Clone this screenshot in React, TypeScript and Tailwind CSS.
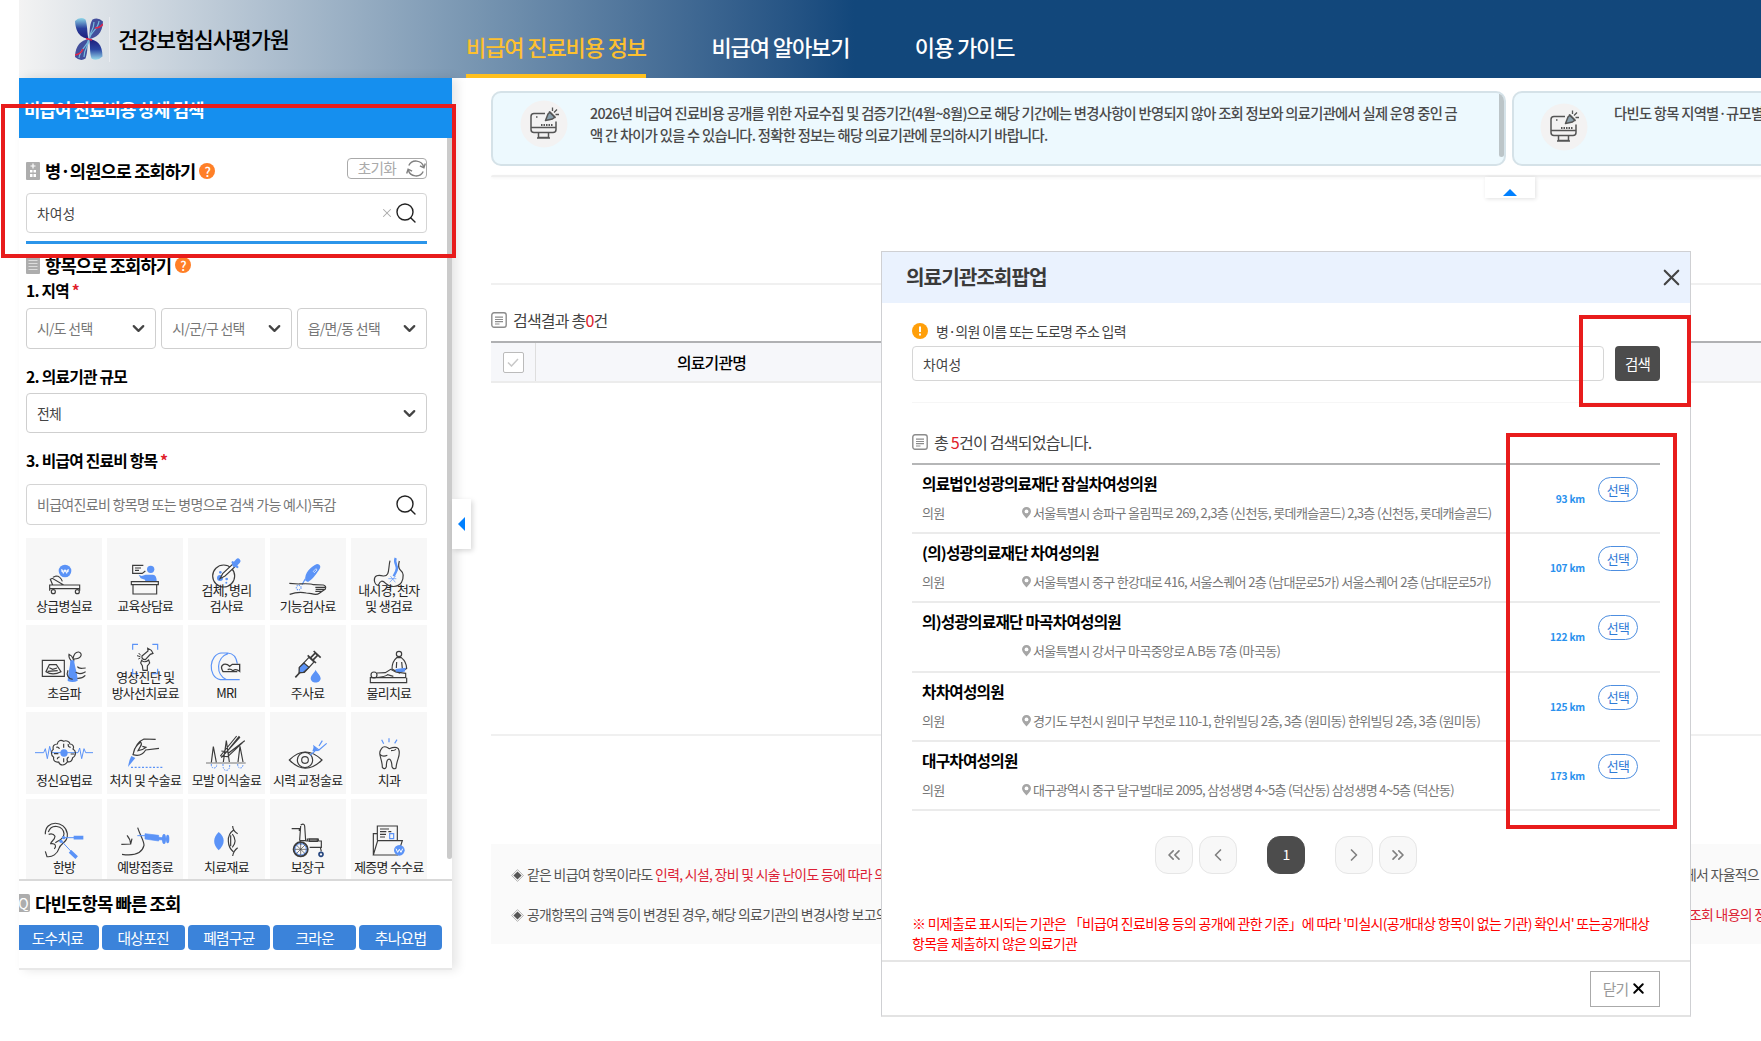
import { useState } from 'react'
import type { ReactNode } from 'react'
import clsx from 'clsx'
import { ChevronDown, ChevronLeft, ChevronRight, ChevronsLeft, ChevronsRight, Search, X } from 'lucide-react'

const BLUE = '#5b93f7'

interface Item {
  label: string[]
  icon: ReactNode
}

interface Hospital {
  name: string
  kind: string
  address: string
  distance: string
}

const hospitals: Hospital[] = [
  {
    name: '의료법인성광의료재단 잠실차여성의원',
    kind: '의원',
    address: '서울특별시 송파구 올림픽로 269, 2,3층 (신천동, 롯데캐슬골드) 2,3층 (신천동, 롯데캐슬골드)',
    distance: '93 km',
  },
  {
    name: '(의)성광의료재단 차여성의원',
    kind: '의원',
    address: '서울특별시 중구 한강대로 416, 서울스퀘어 2층 (남대문로5가) 서울스퀘어 2층 (남대문로5가)',
    distance: '107 km',
  },
  {
    name: '의)성광의료재단 마곡차여성의원',
    kind: '',
    address: '서울특별시 강서구 마곡중앙로 A.B동 7층 (마곡동)',
    distance: '122 km',
  },
  {
    name: '차차여성의원',
    kind: '의원',
    address: '경기도 부천시 원미구 부천로 110-1, 한위빌딩 2층, 3층 (원미동) 한위빌딩 2층, 3층 (원미동)',
    distance: '125 km',
  },
  {
    name: '대구차여성의원',
    kind: '의원',
    address: '대구광역시 중구 달구벌대로 2095, 삼성생명 4~5층 (덕산동) 삼성생명 4~5층 (덕산동)',
    distance: '173 km',
  },
]

// Each tile drawing uses a 228x246 canvas, three units per pixel
const items: Item[] = [
  {
    label: ['상급병실료'],
    icon: (
      <>
        <circle cx="117" cy="99" r="19" fill={BLUE} stroke="none" />
        <path d="M107 93l5 13 5-11 5 11 5-13M105 99h24" stroke="#fff" strokeWidth="3" />
        <path d="M71 141h90v11H71zM71 152v6M161 152v6M80 141l-7-17 6-3 34 20M81 118l9-4c10 0 16 8 19 16" />
        <circle cx="82" cy="161" r="6" />
        <circle cx="154" cy="161" r="6" />
      </>
    ),
  },
  {
    label: ['교육상담료'],
    icon: (
      <>
        <path d="M109 82H77v24h30M84 90h18M84 97h12M105 107l10-8" />
        <path d="M95 110l9 4 12-4h22q11 1 11 20h-34l-1-5-13-4z" fill={BLUE} stroke="none" />
        <circle cx="131" cy="94" r="11" fill={BLUE} stroke="none" />
        <path d="M73 131h81v9H73zM78 140v28h71v-28" />
      </>
    ),
  },
  {
    label: ['검체, 병리', '검사료'],
    icon: (
      <>
        <circle cx="107" cy="114" r="33" />
        <circle cx="96" cy="120" r="9" fill={BLUE} stroke="none" />
        <circle cx="97" cy="103" r="4" fill={BLUE} stroke="none" />
        <circle cx="116" cy="123" r="4" fill={BLUE} stroke="none" />
        <circle cx="115" cy="134" r="3" fill={BLUE} stroke="none" />
        <path d="M96 122l8-15 33-31 7 7-33 31z" fill="#fff" />
        <path d="M134 73l14 14" stroke={BLUE} strokeWidth="7" strokeLinecap="round" />
        <path d="M140 80l10-11" stroke={BLUE} strokeWidth="15" strokeLinecap="round" />
      </>
    ),
  },
  {
    label: ['기능검사료'],
    icon: (
      <>
        <path d="M106 128c-4-24 18-43 35-50 12 2 12 10 6 18-10 15-22 30-33 36z" fill={BLUE} stroke="none" />
        <path d="M130 100l8-8 3 4-8 8z" stroke="#fff" strokeWidth="2" />
        <path d="M96 140l10-18" stroke={BLUE} />
        <path d="M58 136l28 2c20-1 34-2 44 2l30 1q10 3 6 12l-18 13q-8 6-24 1l-15-2c-20-4-33-2-50 4M136 148h29M137 154h28M136 160h20" />
        <circle cx="86" cy="149" r="7" stroke={BLUE} strokeDasharray="3 3" />
      </>
    ),
  },
  {
    label: ['내시경, 천자', '및 생검료'],
    icon: (
      <>
        <path d="M117 68c-6 24 0 47-20 46-16-4-28-2-27 14 1 7 6 14 12 14 6-15 12-16 22-6 14 14 36 12 47-2 8-16 7-30-3-38-7-6-6-16-3-27" />
        <path d="M134 60c-8 20 12 24 1 41l-7 14" stroke={BLUE} strokeWidth="7" />
        <path d="M112 122h24M118 114l15 19M134 114l-18 19" stroke={BLUE} strokeWidth="2" />
      </>
    ),
  },
  {
    label: ['초음파'],
    icon: (
      <>
        <path d="M49 106h66v48H49zM70 119h21l14 21c-15 8-33 8-45 0zM70 128l10 5 13-4M65 139l30-2" />
        <path d="M137 109q-10-11-8-21 9 4 12 13 4-21 17-20c14 4 8 21-14 21l-2 12" />
        <path d="M133 106h11c2 18 11 42 11 61q-14 8-30 1c0-19 8-43 8-62z" fill={BLUE} stroke="none" />
        <path d="M126 136c-6 14 1 26 14 27M154 125c6 9 14 4 25 4M149 142c14 9 21 2 30-2M154 160q14 1 24-9" />
      </>
    ),
  },
  {
    label: ['영상진단 및', '방사선치료료'],
    icon: (
      <>
        <path d="M77 74V58h16M136 58h16v16M77 131v15h16M136 146h16v-15" stroke={BLUE} />
        <path d="M105 93l18-15-1-8 11 6 5 9-8 3-15 16q-12 0-10-11zM104 106q9 9 21-1l3 9-7 9v13h-13l-2-14-5-8z" />
        <path d="M90 92l10 3M94 102l6-3M95 84l6 7" strokeWidth="3" />
      </>
    ),
  },
  {
    label: ['MRI'],
    icon: (
      <>
        <path d="M101 84c-38 2-44 72-4 80h58M97 84h22q25 2 29 32M120 86c-36 10-38 64-4 78" stroke={BLUE} />
        <path d="M148 140h-43q-10-16 2-22 11-2 18 6l8-6h22v21q-11-9-20-2-9-7-16-3" strokeWidth="4" />
      </>
    ),
  },
  {
    label: ['주사료'],
    icon: (
      <>
        <path d="M88 128l29-31 15 14-29 31-14 1z" fill="#fff" />
        <path d="M88 127l14-13 15 13-17 15-13 1z" fill={BLUE} />
        <path d="M76 157l15-16M113 91l25 23M123 97l13-13 7 7-13 13M131 78l21 20" strokeWidth="5" />
        <path d="M137 134c4 10 14 15 15 26 0 17-30 17-30 0 1-11 11-16 15-26z" fill={BLUE} stroke="none" />
      </>
    ),
  },
  {
    label: ['물리치료'],
    icon: (
      <>
        <circle cx="144" cy="87" r="8" />
        <path d="M137 98h14q15 12 16 32l-22 14-22-12q0-23 14-34zM137 111l-1 18M152 111l2 20" />
        <path d="M133 132l32-4-4 12-26 2z" fill={BLUE} stroke="none" />
        <circle cx="69" cy="150" r="9" />
        <path d="M78 144l25-1 16-10 15 8 30 4v13H58v15h109v-15M79 158q24-3 31-9l17 5" />
      </>
    ),
  },
  {
    label: ['정신요법료'],
    icon: (
      <>
        <path d="M27 122h26l5-12 6 30 7-37 5 19h29M122 122h34l5-14 6 32 7-30 5 12h22" stroke={BLUE} strokeWidth="3" />
        <path d="M113 88c8-4 18 0 19 8 9 0 13 9 9 15 11 6 9 22-1 26-1 10-8 14-16 12-7 13-22 13-26 1-10 2-17-4-15-14-9-5-8-20-1-24-3-10 3-16 12-16 1-10 10-14 19-8zM91 106q8-2 9 5M127 96q-2 9 7 10M94 142q0-7 7-7M125 148q-5-8 3-13M84 125h13M134 126h11M113 95v12M113 139v12" />
        <circle cx="114" cy="123" r="11" fill={BLUE} stroke="none" />
      </>
    ),
  },
  {
    label: ['처치 및 수술료'],
    icon: (
      <>
        <path d="M146 82l-35-1c-18 7-29 29-33 47 18 6 30-1 38-14l40-5M80 120q3-16 21-30 5 6-1 14l-7 12q15-2 24-10l-11-3" />
        <path d="M73 132l12 6-22 27q3-20 10-33z" fill={BLUE} stroke="none" />
        <path d="M72 166h96" stroke={BLUE} strokeDasharray="6 5" />
      </>
    ),
  },
  {
    label: ['모발 이식술료'],
    icon: (
      <>
        <path d="M54 153h119" stroke="#777" />
        <path d="M70 151l6-47 9 47M106 150l9-64 9 64M150 150l6-47 9 47M97 132l49-60M100 137l56-62M97 132l22 2 51-48M100 117l20 3M154 72l-30 38M170 86l-49 38" />
        <path d="M70 156q-1 12 8 12t8-12M105 156q-1 19 10 19t10-19M149 156q0 12 8 12t8-12" stroke={BLUE} strokeWidth="3" strokeDasharray="5 3" />
      </>
    ),
  },
  {
    label: ['시력 교정술료'],
    icon: (
      <>
        <path d="M58 144q48-48 98 0-50 49-98 0z" />
        <circle cx="105" cy="144" r="23" />
        <circle cx="105" cy="144" r="10" />
        <path d="M120 130l15-13M136 117l-4-14 15 11 23-20M147 102l10-16" stroke={BLUE} />
        <path d="M132 103l16 14-21 1z" fill={BLUE} stroke="none" />
      </>
    ),
  },
  {
    label: ['치과'],
    icon: (
      <>
        <path d="M92 109c8-11 17-2 23 1 10-4 19-7 27 0 10 19-5 29-7 58q-8 6-12-4c-1-31-17-29-17 0q-5 11-12 2c0-28-16-39-2-57zM87 127q8 9 22 3M120 116q10 0 15-4" />
        <path d="M92 83l6 12M114 79v12M138 83l-7 11" stroke={BLUE} />
      </>
    ),
  },
  {
    label: ['한방'],
    icon: (
      <>
        <path d="M58 106c-2-45 60-43 66-2 3 26-20 27-25 44-5 17-20 27-36 25l-5-16M67 99c9-26 44-20 47 5-1 18-17 20-26 27M68 106q14-4 19 6c0 11-12 14-13 22 15-2 18 7 11 16" />
        <path d="M108 116h40M105 125l35 37" stroke={BLUE} strokeWidth="3" />
        <path d="M143 116h29M132 157l20 19" stroke={BLUE} strokeWidth="11" />
        <circle cx="113" cy="116" r="5" fill={BLUE} stroke="none" />
        <circle cx="105" cy="127" r="5" fill={BLUE} stroke="none" />
      </>
    ),
  },
  {
    label: ['예방접종료'],
    icon: (
      <>
        <path d="M92 86c9 27 19 39 19 53-6 25-31 32-66 27M43 136l28-1q-1-15-11-26M71 135l4-16" />
        <path d="M91 110h25" stroke={BLUE} strokeWidth="3" />
        <path d="M114 104l41 5v17l-41-6zM155 115l14 1v7l-14-1z" fill={BLUE} stroke={BLUE} strokeWidth="2" />
        <ellipse cx="171" cy="120" rx="6" ry="15" fill={BLUE} stroke="none" />
        <ellipse cx="182" cy="120" rx="5" ry="13" fill={BLUE} stroke="none" />
      </>
    ),
  },
  {
    label: ['치료재료'],
    icon: (
      <>
        <path d="M92 99c20 16 20 36 0 55-18-18-18-38 0-55z" fill={BLUE} stroke="none" />
        <path d="M134 81q0 14 15 23M134 171q2-15 15-25M136 94c-22 15-18 50 0 64M133 105c11 14 11 27 0 40M128 109v33" />
      </>
    ),
  },
  {
    label: ['보장구'],
    icon: (
      <>
        <path d="M65 89h23v7M92 81l-3 41 4 15M92 78q11-6 12 3l3 44h-17M107 126h47v19h-35M112 120h33v6h-33zM151 145l3 12" />
        <path d="M118 120h24v7h-24z" fill="#888" />
        <circle cx="92" cy="151" r="21" strokeWidth="6" />
        <circle cx="92" cy="151" r="17" stroke={BLUE} strokeWidth="3" />
        <path d="M92 133v36M74 151h36M79 138l26 26M105 138l-26 26" strokeWidth="2" />
        <circle cx="153" cy="166" r="6" stroke="#27477f" strokeWidth="5" />
      </>
    ),
  },
  {
    label: ['제증명 수수료'],
    icon: (
      <>
        <path d="M79 124V81h60v43M67 168v-64h12M67 168l13-43h74l-14 43zM87 90h27M87 98h19M87 106h18M87 114h15M112 98h9" />
        <path d="M116 104h12v15h-12z" stroke={BLUE} />
        <circle cx="145" cy="154" r="16" fill={BLUE} stroke="none" />
        <path d="M135 149l5 11 5-9 5 9 5-11" stroke="#fff" strokeWidth="3" />
      </>
    ),
  },
]

const regions = ['시/도 선택', '시/군/구 선택', '읍/면/동 선택']
const quickItems = ['도수치료', '대상포진', '폐렴구균', '크라운', '추나요법']

function SelectBox({ text, muted }: { text: string; muted?: boolean }) {
  return (
    <button
      className={clsx(
        'flex h-full min-w-0 flex-1 items-center justify-between rounded-[4px] border border-[#cfcfcf] bg-white pr-[7px] pl-[10px] text-[13.9px]',
        muted ? 'text-[#777]' : 'text-[#444]'
      )}
    >
      <span>{text}</span>
      <ChevronDown size={19} strokeWidth={2.8} className="text-[#444]" />
    </button>
  )
}

function Help() {
  return (
    <span className="ml-[4px] flex size-4 items-center justify-center rounded-full bg-[#ff7f27] text-[13px] leading-none font-medium text-white">?</span>
  )
}

function Required() {
  return <span className="text-[#e0202a]">*</span>
}

function ListIcon() {
  return (
    <svg width="16" height="16" viewBox="0 0 16 16" fill="none" stroke="#8c8c8c" strokeWidth="1.4">
      <rect x="0.8" y="0.8" width="14.4" height="14.4" rx="2.2" />
      <path d="M4 5.2h8M4 7.5h8M4 9.7h8M4 12h4.5" strokeWidth="1.2" />
    </svg>
  )
}

function ResetIcon() {
  return (
    <svg width="20" height="19" viewBox="0 0 20 19" fill="none" stroke="#808080" strokeWidth="1.4">
      <path d="M2.800 6.500a8 8 0 0 1 14.900 1.500M17.200 12.500a8 8 0 0 1-14.900-1.500" />
      <path d="M19.300 4.500l-1.400 4.200-4-1.800M.7 14.500l1.400-4.200 4 1.800" />
    </svg>
  )
}

function Pin() {
  return (
    <svg width="9" height="12" viewBox="0 0 9 12" className="mr-[2px] shrink-0">
      <path d="M4.500 0a4.400 4.400 0 0 1 4.500 4.400C9 7 6.500 9 4.500 11.500 2.500 9 0 7 0 4.400A4.400 4.400 0 0 1 4.500 0z" fill="#a6a6a6" />
      <circle cx="4.500" cy="4.400" r="1.900" fill="#fff" />
    </svg>
  )
}

function Diamond() {
  return (
    <svg width="13" height="13" viewBox="0 0 13 13" className="mr-[3px] inline-block align-[-2px]">
      <path d="M6.500 .6l5.900 5.900-5.900 5.900L.6 6.500z" fill="none" stroke="#aaa" strokeWidth="0.900" />
      <path d="M6.500 2.400l4.100 4.100-4.100 4.100-4.100-4.100z" fill="#555" />
    </svg>
  )
}

function NoticeIcon() {
  return (
    <svg width="48" height="48" viewBox="0 0 48 48" fill="none" className="shrink-0">
      <circle cx="24" cy="24" r="23.5" fill="#f3f2f2" />
      <g stroke="#555" strokeWidth="1.5" strokeLinejoin="round">
        <path d="M25 13.500H14q-3 0-3 3v13q0 3 3 3h19q3 0 3-3v-8M11 27.500h25M18.500 33v4.500h10V33M17 38h13M16 17h1.500" />
        <path d="M21 25h12" strokeDasharray="1.500 1" strokeWidth="1.800" />
        <path d="M25.500 20.500l2.500-6.500 2-2 5 5-2.500 2zM29 11.500l6.500 6.500" fill="#8aa0ad" />
        <path d="M32.500 11V7.500M34 12.500l3-3M35.500 14.500H39" strokeWidth="1.300" />
      </g>
    </svg>
  )
}

function Logo() {
  return (
    <svg width="28" height="42" viewBox="0 0 28 42">
      <defs>
        <linearGradient id="armTop" x1="0" y1="0" x2="0" y2="1">
          <stop offset="0" stopColor="#8fd6e8" />
          <stop offset="0.5" stopColor="#2a3f9c" />
          <stop offset="1" stopColor="#1d1c7a" />
        </linearGradient>
        <linearGradient id="armBottom" x1="0" y1="1" x2="0" y2="0">
          <stop offset="0" stopColor="#9adcec" />
          <stop offset="0.5" stopColor="#2b46a2" />
          <stop offset="1" stopColor="#1d1c7a" />
        </linearGradient>
      </defs>
      <path d="M0 3Q5-2 10.500 1.500C12.500 7 12 15 13.500 21 8 19.500 1 18 0 3z" fill="url(#armTop)" />
      <path d="M17.500 1.500Q23-1.500 28 3.500C27.500 16 21 20 14 21c1-6 0-14 3.500-19.500z" fill="#434f9c" />
      <path d="M14 21c8 1 13.500 5 13.500 17.500Q22 44 16.500 40.500C14.500 35 15.500 27 14 21z" fill="url(#armBottom)" />
      <path d="M13.500 21C6 22.500.5 27 0 39q5.500 5 10.500 1.500C13 34 12 27 13.500 21z" fill="#434f9c" />
      <path d="M24 3c-1 9-8 10-10 18S5 31 4 40M19 4c0 9-5 10-5 17s-5 9-5 18" stroke="#79b9dc" strokeWidth="1.200" fill="none" />
      <path d="M28 6q-3 4-8 4M0 37q6-1 8-6M11 20.500l6 1.500" stroke="#e0264a" strokeWidth="1.500" fill="none" />
    </svg>
  )
}

function Header() {
  return (
    <header className="flex h-[78px] shrink-0 bg-linear-to-r from-[#f3f3f3] via-[#7795b1] via-[459px] to-[#12477b] to-[835px] pl-14">
      <div className="flex h-[78px] w-[391px] items-center">
        <Logo />
        <span className="ml-[6px] h-[45px] w-px bg-white/40" />
        <h1 className="ml-[8px] text-[21.8px] leading-8 font-medium text-black">건강보험심사평가원</h1>
      </div>
      <nav className="flex gap-[65.5px] text-[22px] font-medium text-white">
        <a className="h-[78px] border-b-4 border-[#ffc01e] pt-[29px] leading-[34px] text-[#fdc02f]">비급여 진료비용 정보</a>
        <a className="pt-[29px] leading-[34px]">비급여 알아보기</a>
        <a className="pt-[29px] leading-[34px]">이용 가이드</a>
      </nav>
    </header>
  )
}

function Sidebar() {
  const [keyword, setKeyword] = useState('차여성')

  return (
    <aside className="relative z-10 h-[892px] w-[433px] shrink-0 bg-white shadow-[5px_0_10px_rgba(0,0,0,0.1)]">
      <h2 className="h-[60px] bg-[#158fef] pt-[17px] pl-[5px] text-[17.8px] leading-7 font-bold text-white">비급여 진료비용 상세 검색</h2>

      <div className="flex h-[741px] justify-between overflow-hidden">
        <div className="w-[408px] pt-[22px] pl-[7px]">
          <div className="flex h-[22px] items-center">
            <svg width="14" height="18" viewBox="0 0 14 18">
              <rect width="14" height="18" rx="1" fill="#adadad" />
              <path d="M7 1.500v5M4.500 4h5" stroke="#fff" strokeWidth="1.200" />
              <path d="M4 8h2.500v2.500H4zM7.500 8H10v2.500H7.500zM4 12h2.500v3H4zM7.500 12H10v3H7.500z" fill="#fff" />
            </svg>
            <h3 className="ml-[5px] text-[17.6px] font-bold whitespace-nowrap text-black">병·의원으로 조회하기</h3>
            <Help />
            <button className="-mt-[5px] ml-auto flex h-[21px] w-20 items-center justify-end gap-[10px] rounded-[4px] border border-[#aaa] text-[14.7px] leading-none text-[#aaa]">
              초기화
              <ResetIcon />
            </button>
          </div>

          <div className="mt-[11px] flex h-10 items-center rounded-[4px] border border-[#d4d4d4] pr-[8px] pl-[10px]">
            <input
              value={keyword}
              onChange={e => setKeyword(e.target.value)}
              className="min-w-0 flex-1 text-[13.8px] tracking-normal! text-[#444] outline-none"
            />
            <X size={14} strokeWidth={1.8} className="text-[#aaa]" onClick={() => setKeyword('')} />
            <Search size={24} strokeWidth={1.4} className="text-[#222]" />
          </div>
          <div className="mt-2 h-[3px] bg-[#2b95ea]" />

          <div className="mt-[10px] flex h-[22px] items-center">
            <svg width="14" height="18" viewBox="0 0 14 18">
              <rect width="14" height="18" rx="1" fill="#adadad" />
              <path d="M2.500 4.500h9M2.500 7.500h9M2.500 10.500h9M2.500 13.500h9" stroke="#ddd" strokeWidth="1" />
            </svg>
            <h3 className="ml-[5px] text-[17.7px] font-bold text-black">항목으로 조회하기</h3>
            <Help />
          </div>

          <h4 className="mt-[4px] h-[22px] text-[15.7px] leading-[22px] font-bold text-black">
            1. 지역 <Required />
          </h4>
          <div className="mt-[6px] flex h-[41px] gap-[5px]">
            {regions.map(r => <SelectBox key={r} text={r} muted />)}
          </div>

          <h4 className="mt-[17px] h-[22px] text-[15.8px] leading-[22px] font-bold text-black">2. 의료기관 규모</h4>
          <div className="mt-[5px] flex h-10">
            <SelectBox text="전체" />
          </div>

          <h4 className="mt-[17px] h-[22px] text-[15.8px] leading-[22px] font-bold text-black">
            3. 비급여 진료비 항목 <Required />
          </h4>
          <div className="mt-[12px] flex h-[41px] items-center rounded-[4px] border border-[#d4d4d4] pr-[8px] pl-[10px]">
            <input
              placeholder="비급여진료비 항목명 또는 병명으로 검색 가능 예시)독감"
              className="min-w-0 flex-1 text-[14px] outline-none placeholder:text-[#777]"
            />
            <Search size={24} strokeWidth={1.4} className="text-[#222]" />
          </div>

          <div className="mt-[13px] grid auto-rows-[82px] grid-cols-5 gap-[5px]">
            {items.map(item => (
              <button key={item.label[0]} className="grid bg-[#f7f7f7]">
                <svg
                  viewBox="0 0 228 246"
                  fill="none"
                  stroke="#3c3c3c"
                  strokeWidth="3.500"
                  className="[grid-area:1/1] h-[82px] w-[76px]"
                >
                  {item.icon}
                </svg>
                <span className="z-10 mb-[6px] self-end text-center text-[12.9px] leading-4 whitespace-nowrap text-[#222] [grid-area:1/1]">
                  {item.label.map(line => <span key={line} className="block">{line}</span>)}
                </span>
              </button>
            ))}
          </div>
        </div>
        <div className="h-[721px] w-[5px] rounded-b-[3px] bg-[#cbcbcb]" />
      </div>

      <div className="h-[91px] overflow-hidden border-y-2 border-t-[#d9d9d9] border-b-[#e8e8e8]">
        <div className="mt-[12px] -ml-[3px] flex h-5 items-center gap-[5px]">
          <span className="flex h-[18px] w-[14px] items-center justify-center rounded-[2px] bg-[#adadad] text-[14px] leading-none text-white">Q</span>
          <h3 className="text-[17.8px] leading-5 font-bold text-black">다빈도항목 빠른 조회</h3>
        </div>
        <div className="mt-3 -ml-[3px] flex w-[426px] gap-[3px]">
          {quickItems.map(q => (
            <button key={q} className="h-[25px] flex-1 rounded-[4px] bg-[#3b83da] text-[14.8px] leading-[23px] text-white">{q}</button>
          ))}
        </div>
      </div>

      {/* Collapse handle on the panel's edge */}
      <button className="absolute top-[421px] left-full flex h-[50px] w-[19px] items-center justify-center bg-white shadow-[2px_2px_5px_rgba(0,0,0,0.15)]">
        <svg width="7" height="14" viewBox="0 0 7 14"><path d="M7 0v14L0 7z" fill="#0080ff" /></svg>
      </button>
    </aside>
  )
}

function Main() {
  return (
    <main className="min-w-0 flex-1 overflow-hidden pt-[13px] pl-[39px]">
      <div className="flex h-[75px] gap-[6px] text-[14.3px] leading-[22px] font-medium text-[#4a4a4a]">
        <div className="flex w-[1015px] shrink-0 justify-between overflow-hidden rounded-[10px] border-2 border-[#d5e2e8] bg-[#edf9fe]">
          <div className="flex pt-[7px] pl-[27px]">
            <NoticeIcon />
            <p className="ml-[22px] pt-[2px] whitespace-nowrap">
              2026년 비급여 진료비용 공개를 위한 자료수집 및 검증기간(4월~8월)으로 해당 기간에는 변경사항이 반영되지 않아 조회 정보와 의료기관에서 실제 운영 중인 금<br />
              액 간 차이가 있을 수 있습니다. 정확한 정보는 해당 의료기관에 문의하시기 바랍니다.
            </p>
          </div>
          <div className="mt-px h-[63px] w-[5px] rounded-b-[3px] bg-[#bcc5c8]" />
        </div>
        <div className="flex w-[500px] shrink-0 rounded-[10px] border-2 border-[#d5e2e8] bg-[#edf9fe] pt-[10px] pl-[26px]">
          <NoticeIcon />
          <p className="-mt-px ml-[26px] whitespace-nowrap">다빈도 항목 지역별·규모별</p>
        </div>
      </div>

      <div className="mt-[9px] h-[2px] rounded-tl-full bg-[#efefef] shadow-[0_1px_3px_rgba(0,0,0,0.06)]" />
      <button className="ml-[994px] flex h-[21px] w-[50px] items-end justify-center bg-white pb-[2px] shadow-[1px_1px_4px_rgba(0,0,0,0.12)]">
        <svg width="14" height="7" viewBox="0 0 14 7"><path d="M0 7h14L7 0z" fill="#0080ff" /></svg>
      </button>

      <div className="mt-[85px] h-[2px] bg-[#f0f0f0]" />

      <div className="mt-[25px] flex h-5 items-center gap-[6px] text-[16px] leading-5 text-[#444]">
        <ListIcon />
        <p>검색결과 총<span className="text-[#e0202a]">0</span>건</p>
      </div>

      <div className="mt-[11px] flex h-[42px] border-t-2 border-b-2 border-t-[#b0b1b3] border-b-[#ececec] bg-[#f6f7fa]">
        <div className="flex w-[45px] items-center justify-center border-r border-[#dedede]">
          <span className="flex size-[21px] items-center justify-center rounded-[2px] border border-[#bbb] bg-white">
            <svg width="12" height="9" viewBox="0 0 12 9" fill="none" stroke="#c8c8c8" strokeWidth="1.500"><path d="M1 4.500L4.500 8 11 1" /></svg>
          </span>
        </div>
        <div className="w-[351px] text-center text-[15.9px] leading-[39px] font-medium text-black">의료기관명</div>
      </div>
      <div className="h-[353px] border-b-2 border-[#f0f0f0]" />

      <div className="mt-[108px] h-[100px] bg-[#fafafa] pt-[10px] pl-5 text-[13.9px] leading-10 whitespace-nowrap text-[#555]">
        <div className="flex">
          <p className="w-[1173px] shrink-0">
            <Diamond />
            같은 비급여 항목이라도 <span className="text-[#dc1f35]">인력, 시설, 장비 및 시술 난이도 등에 따라 의</span>
          </p>
          <p>에서 자율적으</p>
        </div>
        <div className="flex">
          <p className="w-[1178px] shrink-0">
            <Diamond />
            공개항목의 금액 등이 변경된 경우, 해당 의료기관의 변경사항 보고의
          </p>
          <p className="text-[#dc1f35]">조회 내용의 정</p>
        </div>
      </div>
    </main>
  )
}

function PageButton({ children, active }: { children: ReactNode; active?: boolean }) {
  return (
    <button
      className={clsx(
        'flex size-[38px] items-center justify-center rounded-[13px] border text-[14px]',
        active ? 'mx-6 border-[#4c4c4c] bg-[#4c4c4c] text-white' : 'border-[#e6e6e6] bg-[#f8f8f8] text-[#808080]'
      )}
    >
      {children}
    </button>
  )
}

function HospitalModal() {
  const [query, setQuery] = useState('차여성')

  return (
    <div className="absolute top-[251px] left-[881px] z-20 h-[766px] w-[810px] border border-b-2 border-[#cfd0d3] border-b-[#e3e3e3] bg-white">
      <div className="flex h-[51px] items-center justify-between bg-[#eaf2fe] pr-[5px] pl-[24px]">
        <h2 className="text-[20.2px] font-bold text-[#3a3a3a]">의료기관조회팝업</h2>
        <X size={27} strokeWidth={1.9} className="text-[#444]" />
      </div>

      <div className="px-[30px] pt-[18px]">
        <div className="flex h-5 items-center gap-[8px] text-[14px] text-[#444]">
          <svg width="16" height="16" viewBox="0 0 16 16">
            <circle cx="8" cy="8" r="8" fill="#ff9f0a" />
            <path d="M8 3.500v5.500M8 10.500v2" stroke="#fff" strokeWidth="2" />
          </svg>
          <span>병·의원 이름 또는 도로명 주소 입력</span>
        </div>
        <div className="mt-[5px] flex h-[35px] gap-[11px]">
          <input
            value={query}
            onChange={e => setQuery(e.target.value)}
            className="h-[35px] min-w-0 flex-1 rounded-[4px] border border-[#d6d6d6] pl-[10px] text-[13.8px] tracking-normal! text-[#444] outline-none"
          />
          <button className="h-[35px] w-[45px] rounded-[4px] bg-[#4c4c4c] text-[14.5px] leading-[33px] text-white">검색</button>
        </div>
        <div className="mt-[21px] h-px bg-[#f6f6f6]" />

        <div className="mt-[28px] flex h-[22px] items-center gap-[6px] text-[16.1px] text-[#444]">
          <ListIcon />
          <p>총 <span className="text-[#e0202a]">5</span>건이 검색되었습니다.</p>
        </div>

        <ul className="mt-[10px] border-t-2 border-[#b5b6b7]">
          {hospitals.map(h => (
            <li key={h.name} className="flex h-[69.2px] justify-between border-b-2 border-[#ebebeb] pt-2 pr-[22px] pl-[10px]">
              <div className="whitespace-nowrap">
                <p className="text-[15.7px] leading-[22px] font-bold text-black">{h.name}</p>
                <div className="mt-[7px] flex items-center text-[13.03px] leading-[22px] text-[#777]">
                  <span className="w-[100px]">{h.kind}</span>
                  <Pin />
                  <span>{h.address}</span>
                </div>
              </div>
              <div className="flex gap-[13px]">
                <span className="pt-[15px] text-[10.2px] leading-[22px] font-bold tracking-[-0.02em]! text-[#2a91ee]">{h.distance}</span>
                <button className="mt-1 h-[25px] w-10 rounded-full border border-[#4d8ee0] text-[12.9px] leading-[22px] text-[#2f7bd6]">선택</button>
              </div>
            </li>
          ))}
        </ul>

        <div className="mt-[25px] flex justify-center gap-[6px]">
          <PageButton><ChevronsLeft size={20} /></PageButton>
          <PageButton><ChevronLeft size={20} /></PageButton>
          <PageButton active>1</PageButton>
          <PageButton><ChevronRight size={20} /></PageButton>
          <PageButton><ChevronsRight size={20} /></PageButton>
        </div>

        <p className="mt-[39px] h-10 text-[13.97px] leading-5 whitespace-nowrap text-[#ff0000]">
          ※ 미제출로 표시되는 기관은 「비급여 진료비용 등의 공개에 관한 기준」에 따라 '미실시(공개대상 항목이 없는 기관) 확인서' 또는공개대상<br />
          항목을 제출하지 않은 의료기관
        </p>
      </div>

      <div className="mt-[7px] flex justify-end border-t-2 border-[#e5e5e5] pt-[9px] pr-[30px]">
        <button className="flex h-9 w-[70px] items-center justify-center gap-[2px] border border-[#aaa] text-[14.8px] text-[#999]">
          닫기
          <X size={17} strokeWidth={2.8} className="text-black" />
        </button>
      </div>
    </div>
  )
}

export default function App() {
  return (
    <div className="relative flex h-[1041px] w-[1761px] flex-col overflow-hidden bg-white pl-[19px] font-['Noto_Sans_CJK_KR','Noto_Sans',sans-serif] **:tracking-tighter">
      <Header />
      <div className="flex min-h-0 flex-1">
        <Sidebar />
        <Main />
      </div>
      <HospitalModal />

      {/* Red marker frames */}
      <div className="pointer-events-none absolute top-[104px] left-[1px] z-30 h-[154px] w-[455px] border-4 border-[#e81c1c]" />
      <div className="pointer-events-none absolute top-[315px] left-[1579px] z-30 h-[92px] w-[112px] border-4 border-[#e81c1c]" />
      <div className="pointer-events-none absolute top-[433px] left-[1506px] z-30 h-[396px] w-[171px] border-4 border-[#e81c1c]" />
    </div>
  )
}
